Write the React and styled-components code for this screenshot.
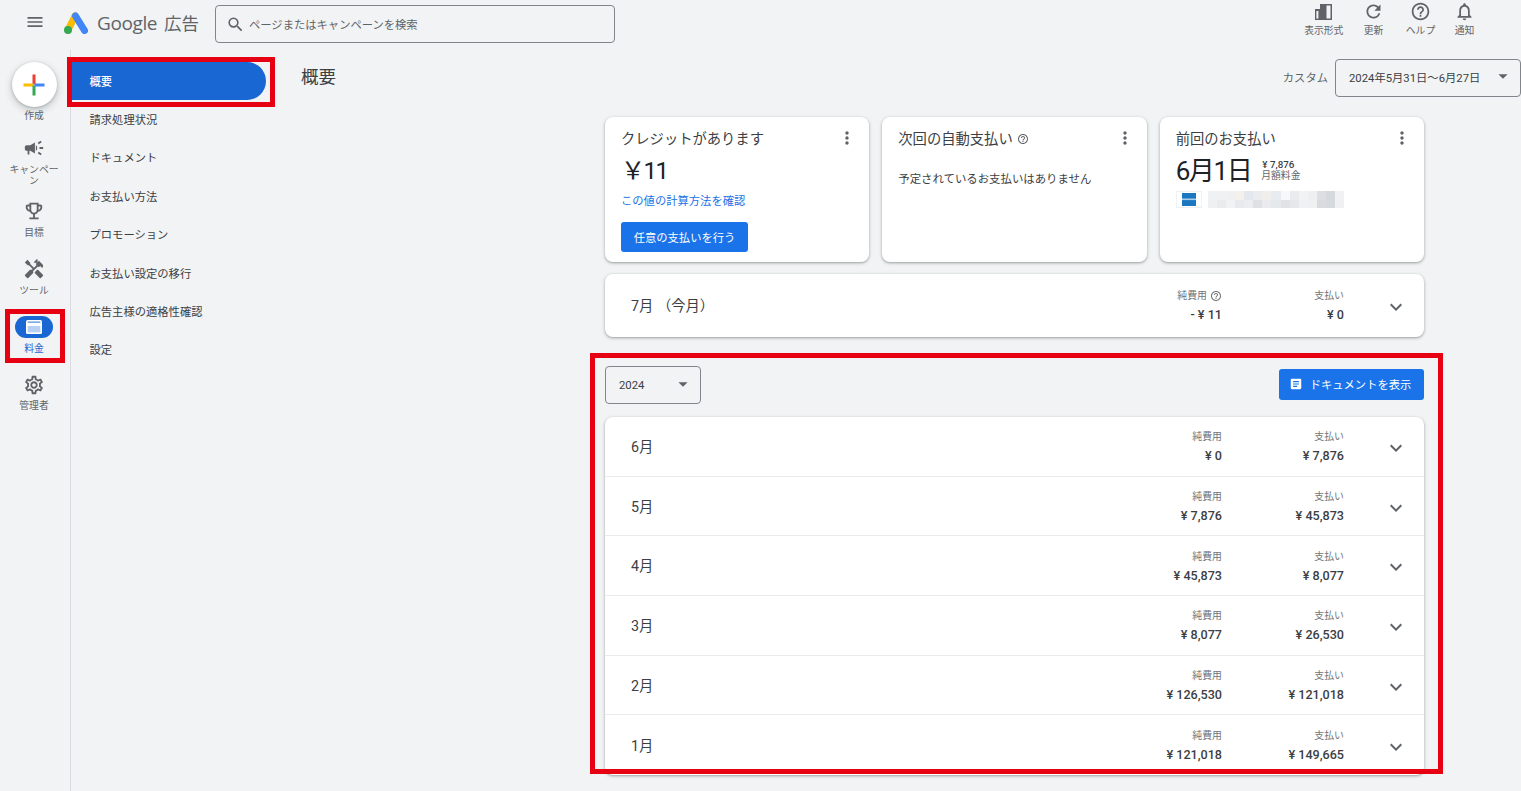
import React from "react";
import styled, { createGlobalStyle } from "styled-components";
import {
  MdMenu, MdSearch, MdCampaign, MdOutlineEmojiEvents, MdHandyman, MdOutlineSettings,
  MdRefresh, MdHelpOutline, MdOutlineNotifications, MdMoreVert, MdExpandMore,
  MdArrowDropDown, MdArticle,
} from "react-icons/md";

const Global = createGlobalStyle`
  html, body { margin: 0; padding: 0; background: #f1f3f4; }
  body { font-family: Roboto, "Noto Sans CJK JP", sans-serif; color: #3c4043; overflow: hidden; }
  * { box-sizing: border-box; }
`;

const Page = styled.div`
  position: relative;
  width: 1521px;
  height: 791px;
  overflow: hidden;
  background: #f1f3f4;
`;

const Header = styled.header`
  display: flex;
  align-items: flex-start;
  height: 50px;
  padding: 5px 35px 0 25px;
`;
const MenuButton = styled.div`
  display: flex;
  width: 20px;
  color: #5f6368;
  margin: 7px 19px 0 0;
`;
const Brand = styled.div`
  display: flex;
  align-items: center;
  width: 151px;
  height: 36px;
  flex: none;
`;
const BrandName = styled.span`
  margin-left: 9px;
  padding-bottom: 1px;
  font-family: "Open Sans", Roboto, "Noto Sans CJK JP", sans-serif;
  font-size: 19px;
  line-height: 26px;
  letter-spacing: -0.4px;
  color: #5f6368;
  white-space: nowrap;
`;
const BrandSuffix = styled.span`
  margin-left: 7px;
  font-family: "Noto Sans CJK JP", sans-serif;
  font-size: 17.5px;
  letter-spacing: 0;
`;
const SearchBox = styled.div`
  display: flex;
  align-items: center;
  width: 400px;
  height: 38px;
  padding-left: 10px;
  border: 1px solid #80868b;
  border-radius: 4px;
  color: #5f6368;
  font-size: 11.3px;
  gap: 4px;
`;
const HeaderActions = styled.div`
  display: flex;
  margin: -3px 0 0 auto;
`;
const HeaderAction = styled.div`
  width: ${p => p.$w}px;
  display: flex;
  flex-direction: column;
  align-items: center;
  color: #5f6368;
  font-size: 9.8px;
  line-height: 12px;
`;
const HeaderIcon = styled.div`
  height: 19px;
  margin-bottom: 4px;
  display: flex;
  align-items: center;
  justify-content: center;
`;

const Body = styled.div`
  display: flex;
  height: 741px;
`;
const Rail = styled.nav`
  width: 71px;
  flex: none;
  padding: 12px 2px 0 0;
  border-right: 1px solid #dadce0;
  display: flex;
  flex-direction: column;
  align-items: center;
`;
const CreateBlock = styled.div`
  height: 75px;
  display: flex;
  flex-direction: column;
  align-items: center;
`;
const CreateCircle = styled.div`
  width: 45px;
  height: 45px;
  border-radius: 50%;
  background: #fff;
  display: flex;
  align-items: center;
  justify-content: center;
  box-shadow: 0 1px 3px rgba(60,64,67,.3), 0 3px 6px 2px rgba(60,64,67,.15);
`;
const RailLabel = styled.div`
  width: 56px;
  text-align: center;
  font-size: 9.8px;
  line-height: 11px;
  color: ${p => (p.$active ? "#1967d2" : "#5f6368")};
  margin-top: ${p => p.$gap || 5}px;
`;
const RailItem = styled.div`
  height: ${p => p.$h}px;
  display: flex;
  flex-direction: column;
  align-items: center;
  color: #5f6368;
`;
const RailIcon = styled.div`
  height: 22px;
  display: flex;
  align-items: center;
  justify-content: center;
`;
const RailPill = styled(RailIcon)`
  width: 38px;
  border-radius: 11px;
  background: #1967d2;
`;

const SubNav = styled.nav`
  width: 204px;
  flex: none;
  padding-top: 12px;
`;
const SubItem = styled.div`
  height: 38.4px;
  width: 195px;
  display: flex;
  align-items: center;
  padding: 0 0 1px 18.5px;
  font-size: 11.3px;
  color: ${p => (p.$active ? "#fff" : "#3c4043")};
  font-weight: ${p => (p.$active ? 500 : 400)};
  background: ${p => (p.$active ? "#1967d2" : "transparent")};
  border-radius: ${p => (p.$active ? "0 20px 20px 0" : "0")};
`;

const Main = styled.main`
  flex: 1;
  padding-top: 9px;
  min-width: 0;
`;
const TitleRow = styled.div`
  display: flex;
  align-items: center;
  height: 38px;
  padding-left: 26px;
  margin-bottom: 20px;
`;
const Title = styled.h1`
  margin: 0 0 5px;
  font-size: 17.5px;
  font-weight: 400;
  color: #3c4043;
`;
const RangeLabel = styled.span`
  margin: 0 7px 2px auto;
  font-size: 11.3px;
  color: #5f6368;
`;
const Select = styled.div`
  display: flex;
  align-items: center;
  justify-content: space-between;
  width: ${p => p.$w}px;
  height: 38px;
  padding: 0 6px ${p => p.$pb}px 13px;
  border: 1px solid #80868b;
  border-radius: 4px;
  font-size: 11.3px;
  color: #3c4043;
  svg { color: #5f6368; margin-top: -2px; }
`;

const Content = styled.div`
  margin-left: 330px;
  width: 819px;
  display: flex;
  flex-direction: column;
`;
const CardRow = styled.div`
  display: flex;
  gap: 13px;
  margin-bottom: 12px;
`;
const Card = styled.section`
  background: #fff;
  border-radius: 8px;
  box-shadow: 0 1px 2px rgba(60,64,67,.3), 0 1px 3px 1px rgba(60,64,67,.15);
`;
const SummaryCard = styled(Card)`
  position: relative;
  flex: 1;
  height: 145px;
  padding: 10px 16px 0;
`;
const MoreButton = styled.div`
  position: absolute;
  top: 11px;
  right: 12px;
  display: flex;
  color: #5f6368;
`;
const CardTitle = styled.div`
  display: flex;
  align-items: center;
  gap: 4px;
  height: 20px;
  font-size: 14.3px;
  color: #3c4043;
  svg { color: #5f6368; margin-top: 3px; }
`;
const BigValue = styled.div`
  font-size: 24px;
  line-height: 34px;
  letter-spacing: -1.5px;
  margin-top: 7px;
  color: #202124;
`;
const TextLink = styled.a`
  display: block;
  margin-top: 6px;
  line-height: 16px;
  font-size: 11.3px;
  color: #1a73e8;
`;
const PrimaryButton = styled.div`
  display: flex;
  align-items: center;
  justify-content: center;
  gap: 7px;
  height: ${p => p.$h}px;
  width: ${p => p.$w}px;
  padding-right: ${p => p.$pr || 0}px;
  background: #1a73e8;
  color: #fff;
  font-size: 11.3px;
  border-radius: 3px;
`;
const FirstAction = styled(PrimaryButton)`
  margin-top: 12px;
`;
const CardNote = styled.div`
  margin-top: 24px;
  font-size: 11.4px;
  line-height: 16px;
  color: #3c4043;
`;
const LastPayment = styled.div`
  display: flex;
  align-items: center;
  gap: 10px;
  margin-top: 4px;
  height: 34px;
`;
const PaymentDate = styled.div`
  font-size: 26px;
  letter-spacing: -1.4px;
  color: #202124;
  white-space: nowrap;
`;
const PaymentAmount = styled.div`
  display: flex;
  flex-direction: column;
  padding-top: 3px;
  font-size: 9.8px;
  line-height: 11px;
  color: #5f6368;
  b { font-weight: 500; color: #3c4043; padding-left: 1px; }
`;
const PaymentMethod = styled.div`
  display: flex;
  align-items: center;
  gap: 6px;
  margin-top: 6px;
`;

const MonthCard = styled(Card)`
  height: 63px;
  display: flex;
`;
const Row = styled.div`
  flex: ${p => (p.$fill ? 1 : "none")};
  height: ${p => (p.$fill ? "auto" : "59.7px")};
  display: flex;
  align-items: center;
  width: 100%;
  padding: 0 16px ${p => (p.$fill ? 1 : 0)}px 26px;
  border-bottom: ${p => (p.$last || p.$fill ? "none" : "1px solid #e8eaed")};
`;
const RowTitle = styled.div`
  flex: 1;
  padding-bottom: 2px;
  font-size: 14.3px;
  color: #3c4043;
  white-space: pre;
`;
const AmountCol = styled.div`
  display: flex;
  flex-direction: column;
  align-items: flex-end;
  padding-top: 1px;
  width: ${p => p.$w}px;
`;
const AmountLabel = styled.div`
  display: flex;
  align-items: center;
  gap: 3px;
  font-size: 9.9px;
  line-height: 14px;
  color: #70757a;
`;
const AmountValue = styled.div`
  margin-top: 4px;
  font-size: 12.6px;
  line-height: 15px;
  font-weight: 500;
  color: #3c4043;
  white-space: nowrap;
`;
const Chevron = styled.div`
  width: 64px;
  padding-top: 3px;
  display: flex;
  justify-content: flex-end;
  color: #5f6368;
`;
const YearBar = styled.div`
  display: flex;
  align-items: center;
  justify-content: space-between;
  margin: 29px 0 13px;
`;
const ViewDocs = styled(PrimaryButton)`
  margin-bottom: 2px;
  svg { flex: none; }
`;
const ListCard = styled(Card)`
  height: 358px;
  overflow: hidden;
`;
const RedFrame = styled.div`
  position: absolute;
  left: ${p => p.$x}px;
  top: ${p => p.$y}px;
  width: ${p => p.$w}px;
  height: ${p => p.$h}px;
  border: 5px solid #e60012;
  pointer-events: none;
`;

const AdsLogo = () => (
  <svg width="24" height="22" viewBox="0 0 24 22">
    <path d="M11 4 L4 18" stroke="#fbbc04" strokeWidth="7" strokeLinecap="round" />
    <path d="M11.5 4 L20.5 18.5" stroke="#4285f4" strokeWidth="7" strokeLinecap="round" />
    <circle cx="4" cy="18" r="4" fill="#34a853" />
  </svg>
);
const PlusIcon = () => (
  <svg width="22" height="22" viewBox="0 0 22 22">
    <rect x="9.5" y="0.5" width="3" height="10" fill="#ea4335" />
    <rect x="0.5" y="9.5" width="10" height="3" fill="#fbbc04" />
    <rect x="9.5" y="11.5" width="3" height="10" fill="#34a853" />
    <rect x="11.5" y="9.5" width="10" height="3" fill="#4285f4" />
  </svg>
);
const BillingIcon = () => (
  <svg width="16" height="14" viewBox="0 0 16 14">
    <rect width="16" height="14" rx="1.5" fill="#fff" />
    <rect x="1.6" y="1.5" width="12.8" height="1.3" fill="#5d93e0" />
    <rect x="1.6" y="6" width="12.8" height="6.4" fill="#b8d0f3" />
  </svg>
);
const ViewIcon = () => (
  <svg width="17" height="16" viewBox="0 0 17 16" fill="#5f6368">
    <path d="M0 5h5v11H0z" />
    <path d="M1.4 7h2v7.6h-2z" fill="#f1f3f4" />
    <path fillRule="evenodd" d="M5 0h12v16H5zm6.5 1.6v12.8h4V1.6z" />
  </svg>
);
const AmexIcon = () => (
  <svg width="26" height="17" viewBox="0 0 26 17">
    <rect x=".5" y=".5" width="25" height="16" fill="#fff" stroke="#eef0f2" />
    <rect x="6" y="2" width="14" height="13" fill="#1b77bf" />
    <rect x="6" y="7.5" width="14" height="1.6" fill="#a9cde9" />
  </svg>
);
const mosaic = [
  ["#eff1f2","#f0f1f3","#f0f0f0","#f4f1ed","#e4e8ee","#eaecef","#f1efec","#e8ebef","#f7f8f9","#e9ebed","#f1f2f3","#eeeff1","#dbdee2","#d5d9de","#f0f1f3"],
  ["#eef0f1","#e9ebec","#f1f2f3","#e9eaec","#ebedf0","#dfe0e1","#e9ebee","#e6e9ec","#e0e2e5","#e5e7ea","#f0f1f2","#eff0f2","#d9dbde","#d6d9dd","#eff0f2"],
];
const Mosaic = () => (
  <svg width="136" height="17" viewBox="0 0 136 17" shapeRendering="crispEdges">
    {mosaic.map((r, y) => r.map((c, x) => <rect key={`${x}-${y}`} x={x * 9.07} y={y * 8.5} width="9.1" height="8.5" fill={c} />))}
  </svg>
);

const railItems = [
  { h: 63, icon: <MdCampaign size={22} />, label: "キャンペーン" },
  { h: 58, icon: <MdOutlineEmojiEvents size={22} />, label: "目標" },
  { h: 58, icon: <MdHandyman size={22} />, label: "ツール" },
  { h: 57.5, icon: <BillingIcon />, label: "料金", active: true },
  { h: 50, icon: <MdOutlineSettings size={22} />, label: "管理者", gap: 4 },
];
const subItems = ["概要","請求処理状況","ドキュメント","お支払い方法","プロモーション","お支払い設定の移行","広告主様の適格性確認","設定"];
const headerActions = [
  { w: 50.5, icon: <ViewIcon />, label: "表示形式" },
  { w: 49, icon: <MdRefresh size={21} />, label: "更新" },
  { w: 45, icon: <MdHelpOutline size={21} />, label: "ヘルプ" },
  { w: 43, icon: <MdOutlineNotifications size={21} />, label: "通知" },
];
const months = [
  ["6月", "¥ 0", "¥ 7,876"],
  ["5月", "¥ 7,876", "¥ 45,873"],
  ["4月", "¥ 45,873", "¥ 8,077"],
  ["3月", "¥ 8,077", "¥ 26,530"],
  ["2月", "¥ 126,530", "¥ 121,018"],
  ["1月", "¥ 121,018", "¥ 149,665"],
];

const Amounts = ({ cost, paid, help }) => (
  <>
    <AmountCol $w={100}>
      <AmountLabel>純費用{help && <MdHelpOutline size={12} />}</AmountLabel>
      <AmountValue>{cost}</AmountValue>
    </AmountCol>
    <AmountCol $w={122}>
      <AmountLabel>支払い</AmountLabel>
      <AmountValue>{paid}</AmountValue>
    </AmountCol>
    <Chevron><MdExpandMore size={24} /></Chevron>
  </>
);

export default function App() {
  return (
    <Page>
      <Global />
      <Header>
        <MenuButton><MdMenu size={20} /></MenuButton>
        <Brand>
          <AdsLogo />
          <BrandName>Google<BrandSuffix>広告</BrandSuffix></BrandName>
        </Brand>
        <SearchBox>
          <MdSearch size={19} />
          <span>ページまたはキャンペーンを検索</span>
        </SearchBox>
        <HeaderActions>
          {headerActions.map(a => (
            <HeaderAction key={a.label} $w={a.w}>
              <HeaderIcon>{a.icon}</HeaderIcon>
              {a.label}
            </HeaderAction>
          ))}
        </HeaderActions>
      </Header>
      <Body>
        <Rail>
          <CreateBlock>
            <CreateCircle><PlusIcon /></CreateCircle>
            <RailLabel $gap={3}>作成</RailLabel>
          </CreateBlock>
          {railItems.map(i => (
            <RailItem key={i.label} $h={i.h}>
              {i.active ? <RailPill>{i.icon}</RailPill> : <RailIcon>{i.icon}</RailIcon>}
              <RailLabel $active={i.active} $gap={i.gap}>{i.label}</RailLabel>
            </RailItem>
          ))}
        </Rail>
        <SubNav>
          {subItems.map((s, i) => <SubItem key={s} $active={i === 0}>{s}</SubItem>)}
        </SubNav>
        <Main>
          <TitleRow>
            <Title>概要</Title>
            <RangeLabel>カスタム</RangeLabel>
            <Select $w={186} $pb={2}>
              <span>2024年5月31日～6月27日</span>
              <MdArrowDropDown size={22} />
            </Select>
          </TitleRow>
          <Content>
            <CardRow>
              <SummaryCard>
                <CardTitle>クレジットがあります</CardTitle>
                <MoreButton><MdMoreVert size={20} /></MoreButton>
                <BigValue>￥11</BigValue>
                <TextLink>この値の計算方法を確認</TextLink>
                <FirstAction $w={127} $h={30}>任意の支払いを行う</FirstAction>
              </SummaryCard>
              <SummaryCard>
                <CardTitle>次回の自動支払い<MdHelpOutline size={12} /></CardTitle>
                <MoreButton><MdMoreVert size={20} /></MoreButton>
                <CardNote>予定されているお支払いはありません</CardNote>
              </SummaryCard>
              <SummaryCard>
                <CardTitle>前回のお支払い</CardTitle>
                <MoreButton><MdMoreVert size={20} /></MoreButton>
                <LastPayment>
                  <PaymentDate>6月1日</PaymentDate>
                  <PaymentAmount><b>¥ 7,876</b>月額料金</PaymentAmount>
                </LastPayment>
                <PaymentMethod><AmexIcon /><Mosaic /></PaymentMethod>
              </SummaryCard>
            </CardRow>
            <MonthCard>
              <Row $fill>
                <RowTitle>7月 （今月）</RowTitle>
                <Amounts cost="- ¥ 11" paid="¥ 0" help />
              </Row>
            </MonthCard>
            <YearBar>
              <Select $w={96} $pb={0}>
                <span>2024</span>
                <MdArrowDropDown size={22} />
              </Select>
              <ViewDocs $w={145} $h={31} $pr={3}>
                <MdArticle size={14} />ドキュメントを表示
              </ViewDocs>
            </YearBar>
            <ListCard>
              {months.map((m, i) => (
                <Row key={m[0]} $last={i === months.length - 1}>
                  <RowTitle>{m[0]}</RowTitle>
                  <Amounts cost={m[1]} paid={m[2]} />
                </Row>
              ))}
            </ListCard>
          </Content>
        </Main>
      </Body>
      <RedFrame $x={67} $y={57} $w={208} $h={50} />
      <RedFrame $x={5} $y={309} $w={60} $h={54} />
      <RedFrame $x={590} $y={353} $w={853} $h={421} />
    </Page>
  );
}
